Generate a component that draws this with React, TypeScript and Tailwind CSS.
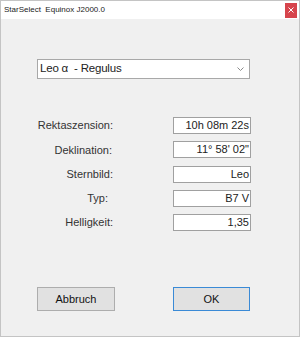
import React from 'react';

const rows = [
  { label: 'Rektaszension:', value: '10h 08m 22s', pr: 'pr-0' },
  { label: 'Deklination:', value: '11° 58\' 02"', pr: 'pr-[1px]' },
  { label: 'Sternbild:', value: 'Leo', pr: 'pr-0' },
  { label: 'Typ:', value: 'B7 V', pr: 'pr-[5px]' },
  { label: 'Helligkeit:', value: '1,35', pr: 'pr-0' },
];

const App: React.FC = () => {
  return (
    <div
      className="w-[300px] h-[337px] flex flex-col bg-[#f0f0f0] border border-[#c4c4c4] text-[#1a1a1a]"
      style={{ fontFamily: '"Liberation Sans", Arial, sans-serif' }}
    >
      {/* title bar */}
      <div className="h-[18px] bg-white flex items-center justify-between pl-[3px] pr-[2px] shrink-0">
        <span className="text-[8px] whitespace-pre text-[#222]">StarSelect  Equinox J2000.0</span>
        <div className="w-[12px] h-[15px] bg-[#d6444c] flex items-center justify-center">
          <svg width="6" height="6" viewBox="0 0 6 6">
            <path d="M0.5 0.5 L5.5 5.5 M5.5 0.5 L0.5 5.5" stroke="#fff" strokeWidth="1" />
          </svg>
        </div>
      </div>

      <div className="flex flex-col pl-[36px]">
        {/* dropdown */}
        <div className="mt-[40px] w-[213px] h-[20px] bg-white border border-[#a8a8a8] flex items-center justify-between pl-[2px] pr-[5px]">
          <span className="text-[11.5px] whitespace-pre leading-none text-[#222] tracking-[-0.2px]">Leo α  - Regulus</span>
          <svg width="7" height="4" viewBox="0 0 7 4">
            <path d="M0.5 0.5 L3.5 3.5 L6.5 0.5" fill="none" stroke="#8a8a8a" strokeWidth="1" />
          </svg>
        </div>

        {/* data rows */}
        <div className="mt-[38px] flex flex-col gap-[7.25px]">
          {rows.map((r) => (
            <div key={r.label} className="flex items-center h-[17px]">
              <div className={`w-[76px] text-right text-[11px] text-[#333] ${r.pr}`}>{r.label}</div>
              <div className="ml-[60px] w-[78px] h-[17px] bg-white border border-[#a0a0a0] flex items-center justify-end pr-[1px] text-[11px] leading-none text-[#222]">
                {r.value}
              </div>
            </div>
          ))}
        </div>

        {/* buttons */}
        <div className="mt-[56px] flex">
          <button className="w-[78px] h-[24px] bg-[#e1e1e1] border border-[#adadad] text-[11px] text-[#111]">
            Abbruch
          </button>
          <button className="ml-[58px] w-[77px] h-[24px] bg-[#e1e1e1] border-[1.5px] border-[#3a8ad6] text-[11px] text-[#111]">
            OK
          </button>
        </div>
      </div>
    </div>
  );
};

export default App;
